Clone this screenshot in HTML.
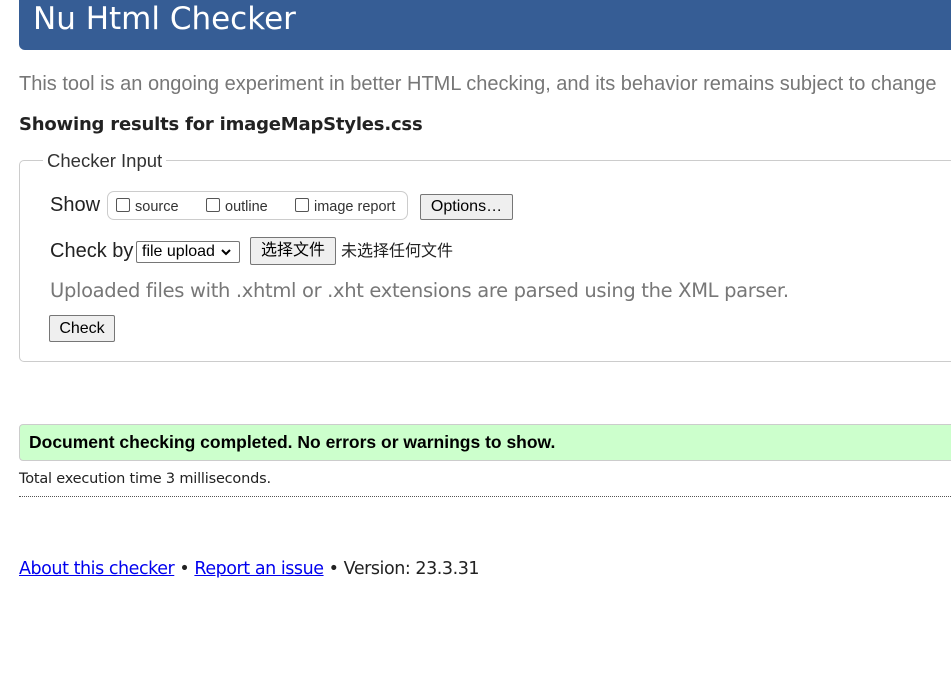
<!DOCTYPE html>
<html><head><meta charset="utf-8"><style>
body{margin:0;background:#fff;width:951px;height:700px;overflow:hidden;position:relative;font-family:"Liberation Sans",Arial,sans-serif;}
.a{position:absolute;white-space:nowrap;}
.hdr{left:19px;top:0;width:960px;height:50px;background:#365d95;border-radius:0 0 0 6px;}
.hdr span{position:absolute;left:14px;top:1px;color:#fff;font-family:"DejaVu Sans",sans-serif;font-size:31px;}
.btn{position:absolute;background:#efefef;border:1px solid #767676;border-radius:2px;font-size:16px;color:#000;box-sizing:border-box;text-align:center;}
.cb{display:inline-block;width:12px;height:12px;border:1px solid #555;border-radius:2px;vertical-align:-1px;margin-right:5px;background:#fff}
</style></head><body>
<div class="a hdr"><span>Nu Html Checker</span></div>
<div class="a" style="left:19px;top:73px;font-size:20px;color:#777;">This tool is an ongoing experiment in better HTML checking, and its behavior remains subject to change</div>
<div class="a" style="left:19px;top:114px;font-size:18px;font-weight:bold;font-family:'DejaVu Sans',sans-serif;color:#222;letter-spacing:-0.2px">Showing results for imageMapStyles.css</div>
<div class="a" style="left:19px;top:160px;width:950px;height:200px;border:1px solid #ccc;border-radius:5px;"></div>
<div class="a" style="left:43px;top:150px;background:#fff;padding:0 4px;font-size:18.5px;color:#333;">Checker Input</div>
<div class="a" style="left:50px;top:194px;font-size:20px;color:#222;">Show</div>
<div class="a" style="left:107px;top:191px;width:299px;height:27px;border:1px solid #ccc;border-radius:7px;"></div>
<div class="a" style="left:116px;top:198px;font-size:14.5px;color:#333;"><span class="cb"></span>source</div>
<div class="a" style="left:206px;top:198px;font-size:14.5px;color:#333;"><span class="cb"></span>outline</div>
<div class="a" style="left:295px;top:198px;font-size:14.5px;color:#333;"><span class="cb"></span>image report</div>
<div class="btn" style="left:420px;top:194px;width:93px;height:26px;line-height:24px;">Options…</div>
<div class="a" style="left:50px;top:240px;font-size:20px;color:#222;">Check by</div>
<div class="a" style="left:136px;top:241px;width:104px;height:22px;border:1px solid #767676;border-radius:2px;box-sizing:border-box;font-size:16px;line-height:20px;padding-left:5px;">file upload <svg width="10" height="8" viewBox="0 0 10 8" style="margin-left:2px"><path d="M1 2l4 4 4-4" stroke="#000" stroke-width="2" fill="none"/></svg></div>
<div class="btn" style="left:250px;top:237px;width:86px;height:28px;line-height:26px;font-family:'Liberation Sans','Noto Sans CJK SC',sans-serif;">选择文件</div>
<div class="a" style="left:341px;top:242px;font-size:16px;color:#222;font-family:'Liberation Sans','Noto Sans CJK SC',sans-serif;line-height:20px">未选择任何文件</div>
<div class="a" style="left:50px;top:279px;font-size:19.5px;color:#777;font-family:'DejaVu Sans',sans-serif;letter-spacing:-0.33px">Uploaded files with .xhtml or .xht extensions are parsed using the XML parser.</div>
<div class="btn" style="left:49px;top:315px;width:66px;height:27px;line-height:25px;">Check</div>
<div class="a" style="left:19px;top:424px;width:950px;height:35px;background:#ccffcc;border:1px solid #ccc;border-radius:4px;"></div>
<div class="a" style="left:29px;top:432px;font-size:17.5px;font-weight:bold;color:#000;">Document checking completed. No errors or warnings to show.</div>
<div class="a" style="left:19px;top:471px;font-size:14.5px;color:#222;font-family:'DejaVu Sans',sans-serif;letter-spacing:-0.2px">Total execution time 3 milliseconds.</div>
<div class="a" style="left:19px;top:496px;width:940px;border-top:1px dotted #555;"></div>
<div class="a" style="left:19px;top:559px;font-size:17.5px;color:#222;font-family:'DejaVu Sans',sans-serif;letter-spacing:-0.45px"><span style="color:#00e;text-decoration:underline">About this checker</span> • <span style="color:#00e;text-decoration:underline">Report an issue</span> • Version: 23.3.31</div>
</body></html>
